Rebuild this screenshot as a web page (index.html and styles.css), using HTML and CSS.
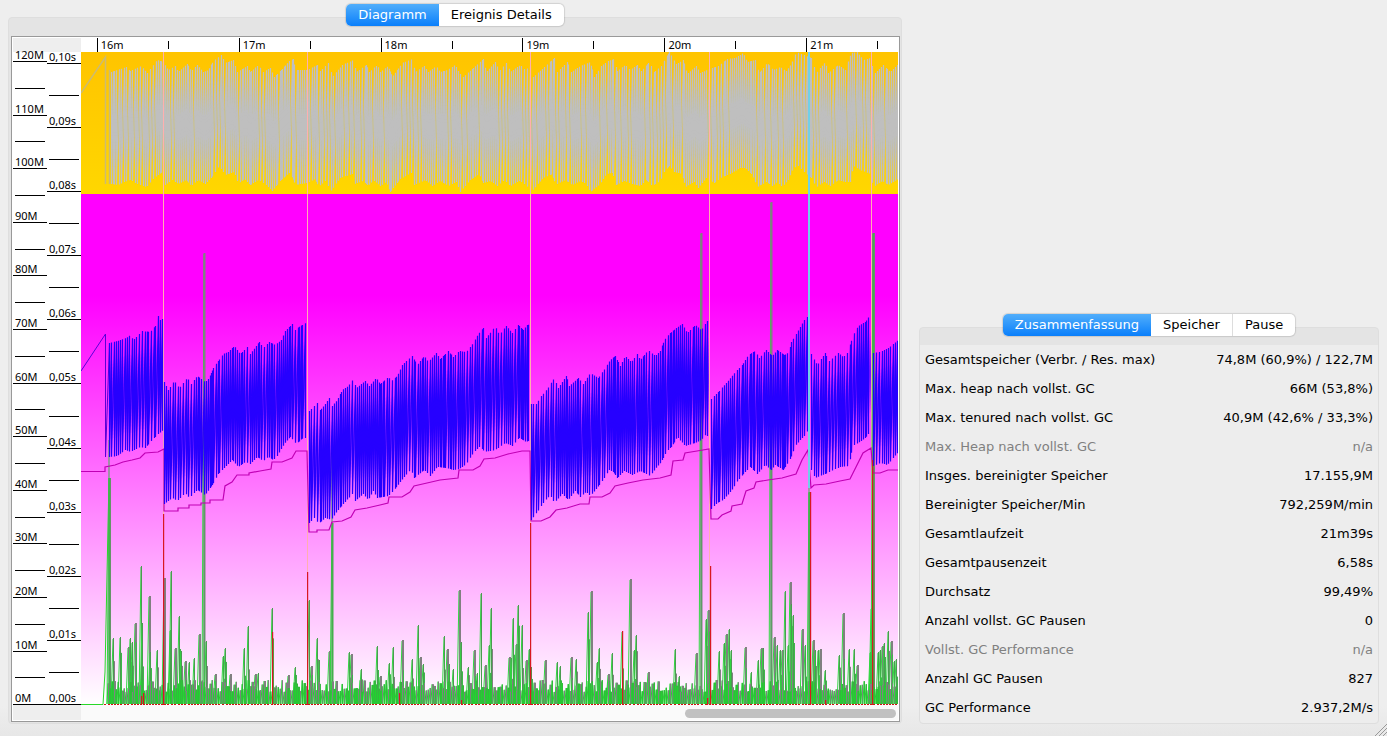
FILE: index.html
```html
<!DOCTYPE html>
<html lang="de">
<head>
    <meta charset="UTF-8">
    <meta name="viewport" content="width=device-width, initial-scale=1.0">
    <title>GC Diagramm</title>
    <link rel="stylesheet" href="styles.css">
</head>
<body>
    <main class="window">
        <section class="pane">
            <div class="tabs">
                <button class="tab active">Diagramm</button>
                <button class="tab">Ereignis Details</button>
            </div>
            <div class="group diagram">
                <div class="frame">
                    <div class="corner"></div>
                    <div class="time-ruler"></div>
                    <div class="axis memory-axis"></div>
                    <div class="axis pause-axis"></div>
                    <div class="plot">
                        <svg class="chart" viewBox="81 52 817 653" preserveAspectRatio="none">
                            <defs>
                                <linearGradient id="young" x1="0" y1="0" x2="0" y2="1">
                                    <stop offset="0" stop-color="#ffc400"/>
                                    <stop offset="1" stop-color="#ffd700"/>
                                </linearGradient>
                                <linearGradient id="tenured" x1="0" y1="0" x2="0" y2="1">
                                    <stop offset="0.2" stop-color="#ff00ff"/>
                                    <stop offset="1" stop-color="#ffffff"/>
                                </linearGradient>
                            </defs>
                            <rect x="81" y="52" width="817" height="142" fill="url(#young)"/>
                            <rect x="81" y="194" width="817" height="511" fill="url(#tenured)"/>
                        </svg>
                    </div>
                    <div class="corner"></div>
                    <div class="scrollbar"><div class="thumb"></div></div>
                </div>
            </div>
        </section>

        <section class="pane side">
            <div class="tabs">
                <button class="tab active">Zusammenfassung</button>
                <button class="tab">Speicher</button>
                <button class="tab">Pause</button>
            </div>
            <div class="group">
                <table class="summary">
                    <tr><th>Gesamtspeicher (Verbr. / Res. max)</th><td>74,8M (60,9%) / 122,7M</td></tr>
                    <tr><th>Max. heap nach vollst. GC</th><td>66M (53,8%)</td></tr>
                    <tr><th>Max. tenured nach vollst. GC</th><td>40,9M (42,6% / 33,3%)</td></tr>
                    <tr class="disabled"><th>Max. Heap nach vollst. GC</th><td>n/a</td></tr>
                    <tr><th>Insges. bereinigter Speicher</th><td>17.155,9M</td></tr>
                    <tr><th>Bereinigter Speicher/Min</th><td>792,259M/min</td></tr>
                    <tr><th>Gesamtlaufzeit</th><td>21m39s</td></tr>
                    <tr><th>Gesamtpausenzeit</th><td>6,58s</td></tr>
                    <tr><th>Durchsatz</th><td>99,49%</td></tr>
                    <tr><th>Anzahl vollst. GC Pausen</th><td>0</td></tr>
                    <tr class="disabled"><th>Vollst. GC Performance</th><td>n/a</td></tr>
                    <tr><th>Anzahl GC Pausen</th><td>827</td></tr>
                    <tr><th>GC Performance</th><td>2.937,2M/s</td></tr>
                </table>
            </div>
        </section>
        <svg class="grip" viewBox="0 0 12 12"><path d="M0 12L12 0M4 12L12 4M8 12L12 8"/></svg>
    </main>
    <script src="chart.js"></script>
</body>
</html>
```
FILE: styles.css
```css
* {
    margin: 0;
    padding: 0;
    box-sizing: border-box;
}

body {
    background: #eeeeee;
    color: #000;
    font-family: 'DejaVu Sans', sans-serif;
    font-size: 13px;
}

.window {
    position: relative;
    display: grid;
    grid-template-columns: minmax(0, 1fr) minmax(0, 460px);
    gap: 17px;
    min-height: 100vh;
    padding: 4px 8px 12px;
    background: linear-gradient(#eeeeee calc(100% - 30px), #e7e7e7);
}

.pane {
    display: flex;
    flex-direction: column;
}

.side {
    justify-content: flex-end;
}

/* Tabs */
.tabs {
    position: relative;
    z-index: 1;
    display: flex;
    align-self: center;
    height: 22px;
    margin-bottom: -9px;
    border-radius: 5px;
    background: #fff;
    box-shadow: 0 0 1px 1px rgba(0, 0, 0, 0.12);
}

.tab {
    padding: 0 12px;
    border: none;
    border-left: 1px solid #ddd;
    background: none;
    color: #000;
    font: inherit;
    line-height: 22px;
}

.tab:last-child {
    border-radius: 0 5px 5px 0;
}

.tab.active {
    border: none;
    border-radius: 5px 0 0 5px;
    background: linear-gradient(#51aefb, #0a7ffb);
    color: #fff;
}

.tab.active + .tab {
    border: none;
}

.group {
    padding: 17px 2px 1px;
    border: 1px solid #dedede;
    border-radius: 4px;
    background: linear-gradient(#e4e4e4 17px, #ededed 17px);
}

.diagram {
    flex: 1;
    display: flex;
    padding: 18px 1px 1px 2px;
    background: #e4e4e4;
}

/* Diagram */
.frame {
    flex: 1;
    display: grid;
    grid-template-columns: 34px 34px minmax(0, 1fr);
    grid-template-rows: 14px minmax(0, 1fr) 15px;
    padding: 1px;
    border: 1px solid #999;
    background: #fff;
    font-family: 'Noto Sans', sans-serif;
    font-size: 11px;
}

.corner {
    grid-column: 1 / 3;
    background: #eee;
}

.time-ruler {
    display: flex;
    overflow: hidden;
}

.time-ruler span {
    flex: 71 0 0;
    width: 0;
    border-left: 1px solid #000;
    line-height: 14px;
    text-indent: 3px;
}

.time-ruler .lead {
    flex: 16 0 0;
    border: none;
}

.time-ruler .half {
    height: 8px;
    margin-top: 3px;
}

.time-ruler span:last-child {
    flex: 20 0 0;
}

.axis {
    display: flex;
    flex-direction: column;
    min-height: 0;
}

.axis span {
    flex: 1 1 0;
    display: flex;
    align-items: flex-end;
    min-height: 0;
    padding-left: 2px;
    border-bottom: 1px solid #000;
    line-height: 13px;
}

.axis .half {
    margin: 0 2px;
}

.memory-axis span:first-child {
    flex: 0 0 10px;
}

.pause-axis span:first-child {
    flex: 0 0 12px;
}

.plot {
    position: relative;
    min-height: 0;
}

.chart {
    position: absolute;
    width: 100%;
    height: 100%;
}

.scrollbar {
    padding: 4px 2px 2px;
    background: #fafafa;
}

.thumb {
    width: 26%;
    height: 9px;
    margin-left: auto;
    border-radius: 5px;
    background: #c1c1c1;
}

/* Summary */
.summary {
    width: 100%;
    border-collapse: collapse;
}

.summary th,
.summary td {
    height: 29px;
    padding: 0 3px;
    font-weight: normal;
    text-align: left;
    white-space: nowrap;
}

.summary td {
    text-align: right;
}

.disabled {
    color: #808080;
}

.grip {
    position: absolute;
    right: 0;
    bottom: 0;
    width: 12px;
    height: 12px;
    fill: none;
    stroke: #999;
}
```
FILE: chart.js
```js
const chart = document.querySelector('.chart');

// used memory after/before each collection: x, y pairs per tenured cycle
const heap = [
    {
        top: [109,343, 117,341, 126,338, 130,335, 133,340, 142,331, 150,332, 155,326, 158,316, 161,322, 163,316],
        bottom: [109,457, 117,456, 125,450, 130,452, 140,447, 145,448, 152,440, 158,434, 163,430]
    },
    {
        top: [164,382, 168,390, 174,381, 179,388, 187,378, 191,384, 197,376, 205,382, 209,378, 213,368, 218,361, 223,354, 228,352, 234,346, 240,354, 247,347, 250,354, 259,342, 263,348, 269,342, 275,345, 281,340, 285,331, 293,323, 295,330, 300,326, 304,324, 307,322],
        bottom: [164,504, 172,498, 177,501, 185,493, 189,498, 197,490, 205,495, 212,485, 218,474, 222,470, 232,460, 238,467, 245,462, 250,464, 257,457, 263,461, 268,457, 273,460, 277,456, 284,444, 290,437, 296,444, 304,437, 307,440]
    },
    {
        top: [309,411, 312,408, 317,403, 320,410, 325,404, 329,398, 332,406, 337,400, 342,390, 348,386, 353,379, 356,388, 365,381, 369,386, 376,378, 380,384, 388,377, 391,381, 397,376, 402,365, 407,360, 412,356, 417,365, 424,356, 428,362, 436,353, 440,359, 448,351, 453,357, 459,351, 466,352, 473,343, 478,334, 483,328, 486,338, 495,326, 499,335, 506,326, 512,333, 518,325, 523,330, 527,325, 530,324],
        bottom: [309,523, 315,517, 318,524, 325,518, 331,520, 337,511, 344,503, 352,494, 354,502, 363,494, 368,500, 373,491, 377,498, 388,496, 394,490, 400,482, 408,472, 411,470, 414,478, 424,470, 430,476, 437,467, 446,468, 453,470, 459,469, 466,464, 473,453, 480,446, 484,452, 495,450, 505,443, 512,446, 519,438, 526,442, 530,440]
    },
    {
        top: [531,404, 536,404, 541,396, 547,389, 554,378, 558,388, 566,376, 569,386, 578,378, 583,384, 590,373, 598,378, 605,368, 610,360, 615,356, 620,366, 625,356, 631,362, 637,354, 640,360, 648,350, 655,356, 660,351, 664,340, 670,333, 676,328, 682,324, 687,333, 695,325, 701,330, 705,324, 709,318],
        bottom: [531,520, 537,512, 543,503, 550,495, 554,503, 562,494, 568,500, 575,491, 580,497, 586,492, 590,496, 597,488, 604,478, 609,470, 613,472, 617,478, 624,471, 632,475, 640,471, 650,476, 655,469, 661,462, 666,452, 672,446, 677,437, 685,446, 695,443, 701,440, 706,434, 709,440]
    },
    {
        top: [711,399, 718,392, 727,382, 735,372, 742,365, 748,355, 755,351, 759,358, 766,350, 772,356, 777,350, 784,355, 789,352, 791,342, 796,334, 800,327, 804,320, 808,316],
        bottom: [711,509, 717,503, 723,500, 731,491, 738,480, 745,472, 750,467, 757,474, 765,465, 771,470, 775,465, 783,470, 790,459, 795,446, 800,440, 804,436, 808,430]
    },
    {
        top: [811,354, 817,365, 825,353, 828,362, 838,353, 843,357, 848,352, 852,337, 858,326, 865,322, 871,313],
        bottom: [811,470, 815,478, 825,474, 833,470, 840,467, 849,466, 852,446, 858,443, 865,438, 871,430]
    },
    {
        top: [873,353, 880,352, 888,348, 898,340],
        bottom: [873,466, 880,463, 887,465, 898,452]
    }
];

const young = {
    top: [111,72, 126,67, 130,71, 141,66, 147,73, 157,60, 163,62, 168,70, 175,66, 178,72, 187,64, 191,71, 197,65, 203,72, 208,70, 213,61, 221,55, 225,63, 233,60, 237,72, 247,66, 250,72, 258,65, 263,72, 270,68, 274,77, 281,70, 289,61, 293,59, 295,70, 307,70, 317,65, 319,72, 329,62, 332,77, 342,65, 353,60, 356,72, 366,65, 369,72, 377,65, 380,72, 388,66, 392,77, 402,63, 412,59, 415,72, 424,66, 428,72, 436,66, 440,72, 447,70, 455,65, 459,73, 463,77, 473,68, 483,59, 486,72, 495,62, 499,71, 507,62, 510,72, 520,65, 525,70, 530,66, 533,77, 543,68, 554,58, 557,72, 567,62, 571,72, 580,66, 590,62, 594,77, 601,66, 608,61, 614,59, 617,71, 625,65, 630,70, 637,65, 641,71, 649,62, 654,72, 661,66, 669,52, 676,64, 683,60, 687,74, 696,66, 700,73, 709,69, 718,66, 727,59, 735,58, 743,53, 747,62, 755,60, 759,73, 767,63, 773,70, 780,67, 786,71, 791,64, 796,52, 804,55, 811,58, 816,73, 825,62, 828,73, 838,65, 845,70, 851,53, 857,52, 863,60, 870,58, 874,74, 883,65, 890,72, 898,64],
    bottom: [111,184, 118,185, 124,182, 130,180, 137,184, 146,187, 154,178, 162,172, 165,185, 172,180, 178,184, 186,180, 191,186, 198,180, 205,184, 211,178, 219,166, 225,175, 234,172, 238,184, 244,179, 250,185, 258,180, 265,184, 272,191, 280,181, 290,172, 295,185, 300,184, 307,183, 315,179, 318,187, 326,180, 330,192, 340,178, 352,174, 354,184, 363,181, 368,186, 373,180, 380,186, 386,182, 390,192, 400,179, 411,173, 414,185, 425,180, 432,186, 440,181, 448,186, 456,182, 460,192, 470,180, 479,174, 483,183, 490,181, 497,186, 504,180, 510,186, 519,181, 526,185, 531,192, 543,178, 552,174, 555,185, 565,180, 572,185, 580,181, 586,184, 590,192, 600,184, 606,174, 612,173, 616,185, 624,181, 632,184, 640,186, 646,180, 652,186, 660,181, 664,172, 669,166, 674,172, 682,174, 685,187, 694,182, 698,188, 706,178, 714,183, 722,177, 730,174, 740,168, 745,168, 752,175, 757,187, 766,182, 772,186, 777,182, 782,187, 788,180, 793,168, 798,166, 804,172, 811,178, 816,187, 824,182, 830,186, 838,180, 845,182, 850,182, 853,166, 860,170, 870,174, 873,187, 882,181, 888,185, 898,179]
};

const tenured = '81,471.5 105,471.5 105,467 115,465 123,462 132,460 140,458 145,453 158,452 164,449 ' +
    '164,511 178,511 178,508 189,508 189,505 201,505 201,503 210,503 210,500 223,500 225,486 232,482 237,475 249,475 249,473 260,471 271,469 272,462 282,462 292,458 296,451 307,451 ' +
    '309,532 317,532 317,530 329,530 332,522 342,521 351,517 355,510 367,508 380,505 388,503 389,497 402,497 410,492 414,486 427,483 440,480 458,478 459,470 473,470 480,466 484,459 495,458 508,454 522,451 530,451 ' +
    '531,521 541,521 550,517 556,510 567,508 580,504 589,504 590,497 602,497 610,493 615,486 628,483 643,480 660,478 671,475 673,461 683,460 685,453 697,451 709,449 ' +
    '711,519 718,519 722,515 731,511 732,506 742,504 746,491 754,488 756,482 768,480 782,478 796,474 802,460 808,450 ' +
    '811,488 814,485 826,484 840,481 850,479 856,467 863,453 871,448 873,473 880,473 888,470 898,470';

// long pauses, everything in between is noise near the zero line
const spikes = [
    [109,478], [113,638], [120,637], [128,647], [130,638], [132,642], [135,623], [141,566], [142,623], [149,596], [150,652], [157,650], [164,578], [170,630], [171,571],
    [175,648], [179,616], [181,651], [185,661], [189,662], [194,658], [199,634], [204,253], [206,641], [215,674], [223,656], [225,648], [230,674], [244,648], [248,626],
    [255,674], [258,673], [272,608], [288,675], [295,667], [309,600], [311,666], [317,638], [319,660], [329,651], [332,523], [349,652], [351,654], [361,669], [377,646],
    [380,676], [389,663], [393,647], [402,640], [412,659], [418,625], [420,657], [423,664], [444,636], [447,649], [449,664], [453,669], [459,590], [461,642], [468,667],
    [474,650], [477,673], [481,593], [485,665], [489,645], [491,608], [509,657], [511,658], [513,618], [516,644], [518,605], [522,625], [526,660], [529,649], [531,667],
    [545,660], [557,662], [560,666], [571,657], [576,659], [588,612], [591,591], [597,662], [599,648], [608,674], [612,653], [622,631], [630,579], [634,650], [636,635],
    [648,672], [675,649], [679,676], [696,653], [701,233], [706,619], [708,610], [719,651], [724,643], [726,634], [729,629], [731,650], [745,647], [751,672], [758,660],
    [761,648], [763,648], [771,202], [774,637], [777,645], [780,650], [782,650], [785,591], [788,645], [790,582], [791,604], [793,615], [802,629], [805,645], [809,492],
    [813,640], [815,650], [818,650], [820,649], [825,670], [839,655], [843,613], [849,649], [854,649], [857,665], [870,652], [871,608], [873,233], [878,652], [880,650],
    [882,646], [884,643], [888,631], [891,641], [894,661], [896,659]
];

const fullGcs = [163, 307, 530, 709, 871];
const redPauses = [[163,514], [272,632], [307,572], [530,523], [622,631], [710,566], [810,492], [872,460], [141,696], [143,693], [399,693], [461,700], [707,698], [825,700]];

let seed = 7;
function random() {
    seed = (seed * 16807) % 2147483647;
    return seed / 2147483647;
}

function draw(name, attributes) {
    const node = document.createElementNS('http://www.w3.org/2000/svg', name);
    for (const key in attributes) {
        node.setAttribute(key, attributes[key]);
    }
    chart.appendChild(node);
}

function line(points, color, width = 1) {
    draw('polyline', { points, fill: 'none', stroke: color, 'stroke-width': width });
}

function bar(x, y1, y2, color, width = 1) {
    draw('rect', { x, y: y1, width, height: y2 - y1, fill: color });
}

function valueAt(points, x) {
    for (let i = 2; i < points.length; i += 2) {
        if (x <= points[i]) {
            const ratio = (x - points[i - 2]) / (points[i] - points[i - 2]);
            return points[i - 1] + ratio * (points[i + 1] - points[i - 1]);
        }
    }
    return points[points.length - 1];
}

// memory climbs until a collection drops it again
function sawtooth(series, color) {
    const start = series.top[0];
    const end = series.top[series.top.length - 2];
    let x = start;
    let points = '';
    while (x < end) {
        const top = valueAt(series.top, x);
        const bottom = valueAt(series.bottom, x);
        points += `${x + 0.5},${top.toFixed(1)} ${x + 0.5},${bottom.toFixed(1)} `;
        x += random() < 0.6 ? 2 : random() < 0.4 ? 1 : 3;
    }
    line(points, color, 1.2);

    // the lines run together towards the middle
    for (let inset = 0.16; inset < 0.48; inset += 0.03) {
        const upper = [];
        const lower = [];
        for (let px = start; px <= end; px += 2) {
            const top = valueAt(series.top, px);
            const height = valueAt(series.bottom, px) - top;
            upper.push(`${px},${(top + height * inset).toFixed(1)}`);
            lower.unshift(`${px},${(top + height * (1 - inset)).toFixed(1)}`);
        }
        draw('polygon', { points: upper.concat(lower).join(' '), fill: color, opacity: 0.08 });
    }
}

sawtooth(young, '#bfbfbf');
line('81,93 105.5,57 105.5,184', '#cdbb70', 1.5);
line('109.5,70 109.5,184', '#cdbb70', 1.5);

fullGcs.forEach(x => bar(x, 52, 705, '#ffafaf'));

// pauses
line('81,704.5 103,704.5 105,672 109,478', '#28d828', 1);
spikes.forEach(([x, y], i) => {
    line(`${x - 2},704 ${x},${y + 1}`, '#30d840');
    bar(x, y, 704, i % 3 ? '#4a9c50' : '#808080', i % 3 ? 1 : 2);
    if (y > 600) {
        const shoulder = y + (704 - y) * (0.2 + random() * 0.4);
        bar(x + 1, shoulder, 704, i % 2 ? '#808080' : '#3cb84a');
    }
    if (y < 540) {
        bar(x - 0.5, y, 704, y < 300 && x < 860 ? '#808080' : '#4aa850', 2);
        bar(x - 0.5, 440, 704, '#3cb84a', 1);
    }
});
for (let x = 108; x < 898; x += 2) {
    const y = 680 + random() * 12;
    line(`${x - 1},704 ${x},${y}`, '#1fd82f');
    bar(x, y, 704, random() < 0.55 ? '#808080' : '#33b83c', random() < 0.45 ? 2 : 1);
}

line('81,371 105.5,334 105.5,457 109.5,343', '#5a00d8');
line(tenured, '#c000b4', 1.2);
heap.forEach(series => sawtooth(series, '#2600ff'));

bar(808, 52, 488, '#70d0e8', 2);
redPauses.forEach(([x, y]) => bar(x, y, 705, '#d81820', 1.2));
for (let x = 104; x < 898; x += random() < 0.3 ? 4 : 3) {
    bar(x, 704, 705, '#d01010', 2);
}

// rulers
function ticks(selector, labels) {
    const ruler = document.querySelector(selector);
    labels.forEach(label => {
        const tick = document.createElement('span');
        tick.textContent = label;
        if (!label) tick.className = 'half';
        ruler.appendChild(tick);
    });
}

const minutes = [''];
for (let m = 16; m <= 21; m++) minutes.push(m + 'm', '');
ticks('.time-ruler', minutes);
document.querySelector('.time-ruler span').className = 'lead';

const megabytes = [];
for (let m = 120; m > 0; m -= 10) megabytes.push(m + 'M', '');
ticks('.memory-axis', [...megabytes, '0M']);

const seconds = [];
for (let s = 10; s > 0; s--) seconds.push((s / 100).toFixed(2).replace('.', ',') + 's', '');
ticks('.pause-axis', [...seconds, '0,00s']);
```
